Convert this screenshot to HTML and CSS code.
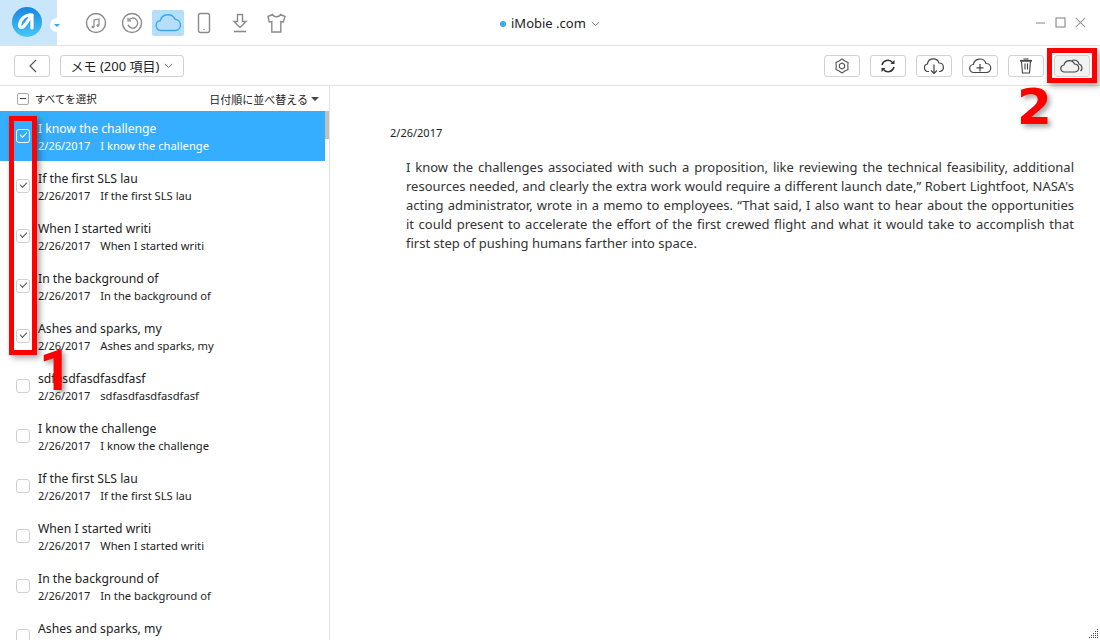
FILE: index.html
```html
<!DOCTYPE html>
<html lang="en">
<head>
  <meta charset="UTF-8" />
  <title>AnyTrans</title>
  <link rel="stylesheet" href="styles.css">
</head>
<body>
  <header class="titlebar">
    <div class="logo-box">
      <div class="logo">
        <svg width="30" height="30" viewBox="0 0 30 30" fill="none" stroke="#fff" stroke-width="3.2" stroke-linecap="round" stroke-linejoin="round"><path d="M20 8C14 7 8 12 7.500 18c-.2 3 2.500 3 4.500 1 3-3 5-7 7.500-10.500"/><path d="M20 8.500V21"/></svg>
      </div>
      <div class="logo-drop"></div>
    </div>
    <nav class="nav-icons">
      <div class="nav-icon">
        <svg width="32" height="32" viewBox="0 0 32 32" fill="none" stroke="#8a8a8a" stroke-width="1.4"><circle cx="16" cy="16" r="9.500"/><path d="M14 20v-7l5-1v6.500" stroke-width="1.200"/><circle cx="12.800" cy="20" r="1.300" fill="#8a8a8a" stroke="none"/><circle cx="17.800" cy="18.600" r="1.300" fill="#8a8a8a" stroke="none"/></svg>
      </div>
      <div class="nav-icon">
        <svg width="32" height="32" viewBox="0 0 32 32" fill="none" stroke="#8a8a8a" stroke-width="1.4"><circle cx="16" cy="16" r="9.500"/><path d="M12.600 13.200a5 5 0 1 1-.6 4.600"/><path d="M12 10.800v3h3" stroke-width="1.200"/></svg>
      </div>
      <div class="nav-icon active">
        <svg width="32" height="32" viewBox="0 0 32 32" fill="none" stroke="#3aa8ea" stroke-width="1.4"><path d="M9 23.500a5 5 0 0 1-.8-9.900 8 8 0 0 1 15-1.200 5.600 5.600 0 0 1 .6 11.100z"/></svg>
      </div>
      <div class="nav-icon">
        <svg width="32" height="32" viewBox="0 0 32 32" fill="none" stroke="#8a8a8a" stroke-width="1.4"><rect x="10.500" y="6.500" width="11" height="19" rx="2"/><circle cx="16" cy="22.500" r=".8" fill="#8a8a8a" stroke="none"/></svg>
      </div>
      <div class="nav-icon">
        <svg width="32" height="32" viewBox="0 0 32 32" fill="none" stroke="#8a8a8a" stroke-width="1.4"><path d="M13.500 7.500h5v7h3.500L16 20.500l-6-6h3.500z"/><path d="M10 24.500h12" stroke-width="1.600"/></svg>
      </div>
      <div class="nav-icon">
        <svg width="32" height="32" viewBox="0 0 32 32" fill="none" stroke="#8a8a8a" stroke-width="1.4"><path d="M12.500 7.500 8 9.500l1.200 5.500 2.600-.5v10.500h9v-10.500l2.600.5L25 9.500l-4.500-2c-1 3-7 3-8 0z"/></svg>
      </div>
    </nav>
    <div class="account">
      <span class="account-dot"></span>
      <span>iMobie .com</span>
      <svg class="chev" width="9" height="6" viewBox="0 0 9 6" fill="none" stroke="#777" stroke-width="1"><path d="M.8 1l3.700 3.500L8.200 1"/></svg>
    </div>
    <div class="win-controls">
      <svg width="11" height="11" viewBox="0 0 11 11" stroke="#999" fill="none" stroke-width="1.200"><path d="M1 6h9"/></svg>
      <svg width="11" height="11" viewBox="0 0 11 11" stroke="#888" fill="none" stroke-width="1.100"><rect x="1" y="1" width="9" height="9"/></svg>
      <svg width="11" height="11" viewBox="0 0 11 11" stroke="#999" fill="none" stroke-width="1.100"><path d="M.8.800l9.400 9.400M10.200.800.800 10.200"/></svg>
    </div>
  </header>

  <div class="toolbar">
    <button class="btn btn-back">
      <svg width="9" height="14" viewBox="0 0 9 14" fill="none" stroke="#555" stroke-width="1.200"><path d="M8 1 2 7l6 6"/></svg>
    </button>
    <button class="btn btn-select">メモ (200 項目)
      <svg class="chev" width="9" height="6" viewBox="0 0 9 6" fill="none" stroke="#777" stroke-width="1"><path d="M.8 1l3.700 3.500L8.200 1"/></svg>
    </button>
    <div class="actions">
      <button class="btn btn-icon">
        <svg width="16" height="16" viewBox="0 0 16 16" fill="none" stroke="#555" stroke-width="1.100" stroke-linejoin="round"><path d="M8 1l2.900 2 3.160 1.500L13.800 8l.26 3.500L10.900 13 8 15l-2.900-2-3.160-1.500L2.200 8l-.26-3.500L5.100 3z"/><path d="M8 5l2.600 1.500v3L8 11 5.400 9.500v-3z"/></svg>
      </button>
      <button class="btn btn-icon">
        <svg width="18" height="18" viewBox="0 0 18 18" fill="none" stroke="#333" stroke-width="1.500"><path d="M3 8a6 6 0 0 1 10.500-2.500"/><path d="M15 10a6 6 0 0 1-10.500 2.500"/><path d="M15.500 3v4h-4z" fill="#333" stroke="none"/><path d="M2.500 15v-4h4z" fill="#333" stroke="none"/></svg>
      </button>
      <button class="btn btn-icon">
        <svg width="22" height="18" viewBox="0 0 22 18" fill="none" stroke="#444" stroke-width="1.200"><path d="M6 14.500H5a3.800 3.800 0 0 1-.6-7.500A6 6 0 0 1 16 6a4.300 4.300 0 0 1 1 8.500h-1"/><path d="M11 7.500v9M8 13.500l3 3 3-3"/></svg>
      </button>
      <button class="btn btn-icon">
        <svg width="24" height="18" viewBox="0 0 24 18" fill="none" stroke="#444" stroke-width="1.200"><path d="M6 15.500a4 4 0 0 1-.6-8A6.500 6.500 0 0 1 18 6.500a4.500 4.500 0 0 1 .5 9z"/><path d="M12 7v7.500M8.500 10.800h7"/></svg>
      </button>
      <button class="btn btn-icon">
        <svg width="14" height="16" viewBox="0 0 14 16" fill="none" stroke="#444" stroke-width="1.100"><path d="M1 2.800h12" stroke-width="1.800"/><path d="M4.500 1h5"/><path d="M2.500 3.500l1 11.500h7l1-11.500"/><path d="M6 5.500v6M8.500 5.500v6"/></svg>
      </button>
      <button class="btn btn-icon btn-pressed">
        <svg width="26" height="16" viewBox="0 0 26 16" fill="none" stroke="#444" stroke-width="1.200"><path d="M5.500 14a3.500 3.500 0 0 1-.5-7A5.500 5.500 0 0 1 15.500 6a4 4 0 0 1 .5 8z"/><path d="M13 2.500a5 5 0 0 1 7 3.500 4 4 0 0 1 1.500 7"/></svg>
      </button>
    </div>
  </div>

  <main class="content">
    <aside class="sidebar">
      <div class="list-head">
        <span class="select-all"><span class="minus-box"></span>すべてを選択</span>
        <span class="sort">日付順に並べ替える<span class="caret"></span></span>
      </div>
      <div class="list">
        <div class="scroll-thumb"></div>
        <div class="row selected"><span class="check on"></span><div><p class="row-title">I know the challenge</p><p class="row-sub"><span>2/26/2017</span>I know the challenge</p></div></div>
        <div class="row"><span class="check on"></span><div><p class="row-title">If the first SLS lau</p><p class="row-sub"><span>2/26/2017</span>If the first SLS lau</p></div></div>
        <div class="row"><span class="check on"></span><div><p class="row-title">When I started writi</p><p class="row-sub"><span>2/26/2017</span>When I started writi</p></div></div>
        <div class="row"><span class="check on"></span><div><p class="row-title">In the background of</p><p class="row-sub"><span>2/26/2017</span>In the background of</p></div></div>
        <div class="row"><span class="check on"></span><div><p class="row-title">Ashes and sparks, my</p><p class="row-sub"><span>2/26/2017</span>Ashes and sparks, my</p></div></div>
        <div class="row"><span class="check"></span><div><p class="row-title">sdfasdfasdfasdfasf</p><p class="row-sub"><span>2/26/2017</span>sdfasdfasdfasdfasf</p></div></div>
        <div class="row"><span class="check"></span><div><p class="row-title">I know the challenge</p><p class="row-sub"><span>2/26/2017</span>I know the challenge</p></div></div>
        <div class="row"><span class="check"></span><div><p class="row-title">If the first SLS lau</p><p class="row-sub"><span>2/26/2017</span>If the first SLS lau</p></div></div>
        <div class="row"><span class="check"></span><div><p class="row-title">When I started writi</p><p class="row-sub"><span>2/26/2017</span>When I started writi</p></div></div>
        <div class="row"><span class="check"></span><div><p class="row-title">In the background of</p><p class="row-sub"><span>2/26/2017</span>In the background of</p></div></div>
        <div class="row"><span class="check"></span><div><p class="row-title">Ashes and sparks, my</p><p class="row-sub"><span>2/26/2017</span>Ashes and sparks, my</p></div></div>
      </div>
    </aside>
    <section class="detail">
      <p class="detail-date">2/26/2017</p>
      <p class="detail-text">I know the challenges associated with such a proposition, like reviewing the technical feasibility, additional resources needed, and clearly the extra work would require a different launch date,” Robert Lightfoot, NASA's acting administrator, wrote in a memo to employees. “That said, I also want to hear about the opportunities it&nbsp;could present to accelerate the effort of the first crewed flight and what it would take to accomplish that first&nbsp;step of pushing humans farther into space.</p>
    </section>
  </main>

  <svg class="grip" width="11" height="11" viewBox="0 0 11 11" fill="#444"><rect x="9" y="1" width="1" height="1"/><rect x="9" y="3" width="1" height="1"/><rect x="9" y="5" width="1" height="1"/><rect x="9" y="7" width="1" height="1"/><rect x="9" y="9" width="1" height="1"/><rect x="7" y="3" width="1" height="1"/><rect x="7" y="5" width="1" height="1"/><rect x="7" y="7" width="1" height="1"/><rect x="7" y="9" width="1" height="1"/><rect x="5" y="5" width="1" height="1"/><rect x="5" y="7" width="1" height="1"/><rect x="5" y="9" width="1" height="1"/><rect x="3" y="7" width="1" height="1"/><rect x="3" y="9" width="1" height="1"/><rect x="1" y="9" width="1" height="1"/></svg>

  <!-- red annotations painted over the screenshot -->
  <div class="mark mark-list"></div>
  <div class="mark mark-btn"></div>
  <div class="mark-num num-1">1</div>
  <div class="mark-num num-2">2</div>
</body>
</html>
```

FILE: styles.css
```css
* {
  box-sizing: border-box;
}

html, body {
  margin: 0;
  height: 640px;
  overflow: hidden;
}

body {
  font-family: "Noto Sans", "Noto Sans CJK JP", sans-serif;
  font-size: 12px;
  color: #222;
  background: #fff;
  position: relative;
}

p {
  margin: 0;
}

.titlebar {
  height: 46px;
  display: flex;
  align-items: center;
  border-bottom: 1px solid #e2e2e2;
  position: relative;
}

.logo-box {
  width: 57px;
  height: 45px;
  background: #c9e6fb;
  position: relative;
  flex: none;
}

.logo {
  position: absolute;
  left: 12px;
  top: 7px;
  width: 30px;
  height: 30px;
  border-radius: 50%;
  background: linear-gradient(#1a84e0, #45c8fb);
}

.logo svg {
  display: block;
}

.logo-drop {
  position: absolute;
  left: 50px;
  top: 18px;
  width: 14px;
  height: 14px;
  border-radius: 50%;
  background: #fff;
}

.logo-drop::after {
  content: "";
  position: absolute;
  left: 4px;
  top: 6px;
  border: 3px solid transparent;
  border-top: 3px solid #3aa8ea;
}

.nav-icons {
  display: flex;
  margin-left: 23px;
  gap: 4px;
}

.nav-icon {
  width: 32px;
  height: 26px;
  display: flex;
  align-items: center;
  justify-content: center;
  border-radius: 2px;
}

.nav-icon.active {
  background: #b5defa;
}

.account {
  position: absolute;
  left: 500px;
  top: 15px;
  display: flex;
  align-items: center;
  font-size: 13px;
  line-height: 17px;
}

.account-dot {
  width: 6px;
  height: 6px;
  border-radius: 50%;
  background: #35aaf5;
  margin-right: 5px;
}

.account .chev {
  margin-left: 5px;
}

.win-controls {
  margin-left: auto;
  margin-right: 14px;
  display: flex;
  gap: 9px;
}

.toolbar {
  height: 40px;
  display: flex;
  align-items: center;
  padding: 0 10px 0 14px;
  border-bottom: 1px solid #e2e2e2;
}

.btn {
  height: 22px;
  border: 1px solid #d2d2d2;
  border-radius: 3px;
  background: #fff;
  display: inline-flex;
  align-items: center;
  justify-content: center;
  padding: 0;
  font: inherit;
  color: #222;
}

.btn-back {
  width: 36px;
}

.btn-select {
  width: 124px;
  margin-left: 10px;
  font-size: 13px;
  gap: 5px;
}

.actions {
  margin-left: auto;
  display: flex;
  gap: 10px;
}

.btn-icon {
  width: 36px;
}

.btn-pressed {
  background: #f2f2f2;
}

.content {
  display: flex;
  height: 554px;
}

.sidebar {
  width: 330px;
  flex: none;
  border-right: 1px solid #e2e2e2;
}

.list-head {
  height: 25px;
  display: flex;
  align-items: center;
  justify-content: space-between;
  padding: 0 10px 0 17px;
}

.select-all {
  display: flex;
  align-items: center;
  gap: 6px;
  font-size: 10.5px;
}

.minus-box {
  width: 12px;
  height: 12px;
  border: 1px solid #aaa;
  border-radius: 2px;
  position: relative;
}

.minus-box::after {
  content: "";
  position: absolute;
  left: 2px;
  top: 4px;
  width: 6px;
  height: 1px;
  background: #444;
}

.sort {
  display: flex;
  align-items: center;
  gap: 3px;
  font-size: 11px;
}

.caret {
  border: 4px solid transparent;
  border-top: 4px solid #444;
  margin-top: 4px;
}

.list {
  position: relative;
  height: 529px;
  overflow: hidden;
}

.scroll-thumb {
  position: absolute;
  right: 0;
  top: 0;
  width: 4px;
  height: 28px;
  background: #bfbfbf;
}

.row {
  height: 50px;
  display: flex;
  padding: 9px 0 0 16px;
  gap: 8px;
  line-height: 17px;
}

.row.selected {
  background: #35aeff;
  color: #fff;
  margin-right: 4px;
}

.row-title {
  font-size: 12.2px;
}

.row-sub {
  font-size: 11.2px;
}

.row-sub span {
  font-size: 11px;
  margin-right: 10px;
}

.check {
  width: 14px;
  height: 14px;
  margin-top: 9px;
  flex: none;
  border: 1px solid #d0d0d0;
  border-radius: 3px;
  position: relative;
}

.check.on::after {
  content: "";
  position: absolute;
  left: 3px;
  top: 2px;
  width: 6px;
  height: 3px;
  border-left: 1px solid #555;
  border-bottom: 1px solid #555;
  transform: rotate(-45deg);
}

.row.selected .check {
  border-color: #fff;
}

.row.selected .check.on::after {
  border-color: #fff;
}

.detail {
  flex: 1;
  padding: 38px 26px 0 60px;
}

.detail-date {
  font-size: 11px;
  line-height: 17px;
}

.detail-text {
  margin: 17px 0 0 16px;
  line-height: 19px;
  font-size: 13px;
  text-align: justify;
  color: #333;
}

.grip {
  position: absolute;
  right: 1px;
  bottom: 1px;
}

.mark {
  position: absolute;
  border: 5px solid #f00;
  box-shadow: 3px 3px 6px rgba(0,0,0,0.35);
}

.mark-list {
  left: 9px;
  top: 116px;
  width: 28px;
  height: 239px;
}

.mark-btn {
  left: 1047px;
  top: 48px;
  width: 50px;
  height: 35px;
}

.mark-num {
  position: absolute;
  color: #f00;
  font-weight: bold;
  text-shadow: 3px 3px 5px rgba(0,0,0,0.35);
}

.num-1 {
  left: 39px;
  top: 337px;
  font: bold 58px/66px Roboto, sans-serif;
}

.num-2 {
  left: 1017px;
  top: 77px;
  font: bold 50px/60px "DejaVu Sans", sans-serif;
}
```
